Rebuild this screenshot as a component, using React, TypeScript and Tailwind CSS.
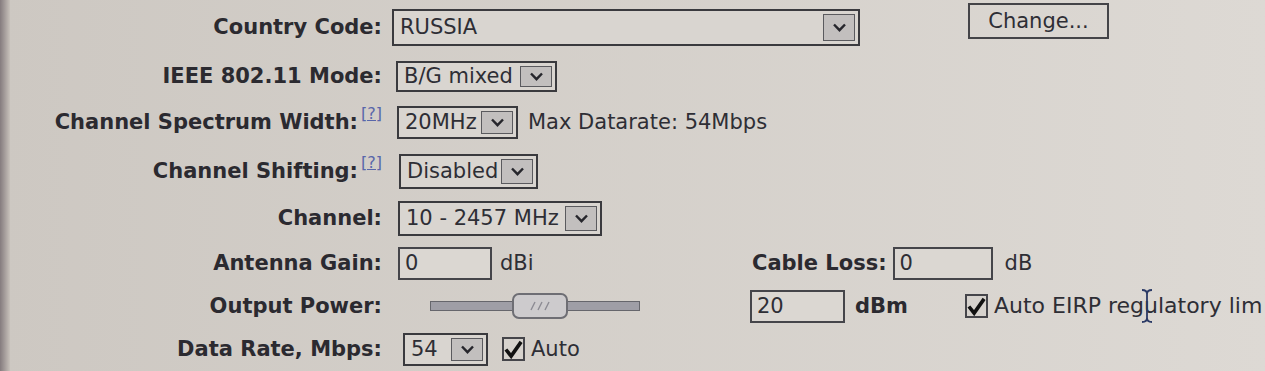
import React from "react";

const Chevron = () => (
  <svg width="15" height="9" viewBox="0 0 15 9">
    <polyline points="2,1.5 7.5,7.2 13,1.5" fill="none" stroke="#26262c" strokeWidth="2.4" />
  </svg>
);

function Select({ text, className }: { text: string; className: string }) {
  return (
    <div
      className={
        "flex items-stretch justify-between border-2 border-[#3a3a3e] bg-[#d9d5d0] " + className
      }
    >
      <span className="pl-[6px] self-center text-[21px] leading-none text-[#2e2e35] whitespace-nowrap">{text}</span>
      <span className="my-[3px] mr-[3px] w-[32px] shrink-0 border border-[#5a5a5e] bg-[#c2bfbe] flex items-center justify-center">
        <Chevron />
      </span>
    </div>
  );
}

function Input({ value, className }: { value: string; className: string }) {
  return (
    <div
      className={
        "flex items-center border-2 border-[#45454a] bg-[#dbd7d2] pl-[5px] text-[21px] leading-none text-[#2e2e35] " +
        className
      }
    >
      {value}
    </div>
  );
}

const Check = () => (
  <div className="w-[23px] h-[24px] shrink-0 border-2 border-[#45454a] bg-[#d6d2cd] flex items-center justify-center">
    <svg width="19" height="19" viewBox="0 0 20 20">
      <path d="M2 10 L7.5 17 L18 2" fill="none" stroke="#111" strokeWidth="3.8" strokeLinejoin="miter" />
    </svg>
  </div>
);

function Label({ text, help }: { text: string; help?: boolean }) {
  return (
    <div className="w-[386px] shrink-0 flex justify-end items-center pr-[4px]">
      <span className="font-bold text-[21px] leading-none text-[#2b2a30] whitespace-nowrap">{text}</span>
      {help && (
        <span className="relative -top-[9px] ml-[3px] text-[16px] leading-none underline text-[#5866aa]">[?]</span>
      )}
    </div>
  );
}

export default function App() {
  return (
    <div className="w-[1265px] h-[371px] overflow-hidden flex bg-linear-to-r from-[#cdc8c2] to-[#ddd9d4] font-['DejaVu_Sans',Verdana,sans-serif]">
      <div className="w-[10px] shrink-0 bg-linear-to-r from-[#857c7e] to-[#c8c2bb]" />
      <div className="flex-1 -ml-[10px] flex flex-col">
        {/* Row 1 */}
        <div className="h-[55px] flex items-center">
          <Label text="Country Code:" />
          <div className="ml-[6px]">
            <Select text="RUSSIA" className="w-[468px] h-[37px]" />
          </div>
          <div className="ml-[108px] self-start mt-[3px] w-[141px] h-[36px] border-2 border-[#444448] flex items-center justify-center text-[21px] leading-none text-[#2e2e35]">
            Change...
          </div>
        </div>
        {/* Row 2 */}
        <div className="h-[43px] flex items-center">
          <Label text="IEEE 802.11 Mode:" />
          <div className="ml-[10px]">
            <Select text="B/G mixed" className="w-[161px] h-[31px]" />
          </div>
        </div>
        {/* Row 3 */}
        <div className="h-[49px] flex items-center">
          <Label text="Channel Spectrum Width:" help />
          <div className="ml-[11px]">
            <Select text="20MHz" className="w-[121px] h-[33px]" />
          </div>
          <span className="ml-[10px] text-[21px] leading-none text-[#2e2e35] whitespace-nowrap">Max Datarate: 54Mbps</span>
        </div>
        {/* Row 4 */}
        <div className="h-[49px] flex items-center">
          <Label text="Channel Shifting:" help />
          <div className="ml-[13px]">
            <Select text="Disabled" className="w-[139px] h-[35px]" />
          </div>
        </div>
        {/* Row 5 */}
        <div className="h-[45px] flex items-center">
          <Label text="Channel:" />
          <div className="ml-[12px]">
            <Select text="10 - 2457 MHz" className="w-[204px] h-[35px]" />
          </div>
        </div>
        {/* Row 6 */}
        <div className="h-[44px] flex items-center">
          <Label text="Antenna Gain:" />
          <div className="ml-[12px] w-[354px] flex items-center">
            <Input value="0" className="w-[94px] h-[33px]" />
            <span className="ml-[8px] text-[21px] leading-none text-[#2e2e35]">dBi</span>
          </div>
          <span className="font-bold text-[21px] leading-none text-[#2b2a30] whitespace-nowrap">Cable Loss:</span>
          <Input value="0" className="ml-[6px] w-[100px] h-[33px]" />
          <span className="ml-[12px] text-[21px] leading-none text-[#2e2e35]">dB</span>
        </div>
        {/* Row 7 */}
        <div className="h-[42px] flex items-center relative">
          <Label text="Output Power:" />
          <div className="ml-[12px] w-[352px] flex items-center">
            <div className="ml-[32px] w-[210px] h-[26px] relative flex items-center">
              <div className="w-full h-[10px] border border-[#66666c] bg-[#9f9ea6]" />
              <div className="absolute left-[82px] top-0 w-[56px] h-[26px] rounded-[7px] border-2 border-[#6e6e74] bg-[#cdcbcd] flex items-center justify-center">
                <svg width="22" height="10" viewBox="0 0 22 10">
                  <path d="M2 9 L6 1 M9 9 L13 1 M16 9 L20 1" stroke="#8c8b93" strokeWidth="1.4" fill="none" />
                </svg>
              </div>
            </div>
          </div>
          <Input value="20" className="w-[95px] h-[33px]" />
          <span className="ml-[10px] font-bold text-[21px] leading-none text-[#2b2a30]">dBm</span>
          <div className="ml-[57px]">
            <Check />
          </div>
          <span className="ml-[6px] text-[22px] leading-none text-[#2e2e35] whitespace-nowrap">Auto EIRP regulatory lim</span>
          <svg className="absolute left-[1141px] top-[4px]" width="12" height="34" viewBox="0 0 12 34">
            <path d="M1 1 Q6 1 6 5 L6 29 Q6 33 1 33 M11 1 Q6 1 6 5 M6 29 Q6 33 11 33" fill="none" stroke="#2b3a66" strokeWidth="1.8" />
          </svg>
        </div>
        {/* Row 8 */}
        <div className="h-[44px] flex items-center">
          <Label text="Data Rate, Mbps:" />
          <div className="ml-[17px]">
            <Select text="54" className="w-[85px] h-[33px]" />
          </div>
          <div className="ml-[14px]">
            <Check />
          </div>
          <span className="ml-[6px] text-[21px] leading-none text-[#2e2e35]">Auto</span>
        </div>
      </div>
    </div>
  );
}
